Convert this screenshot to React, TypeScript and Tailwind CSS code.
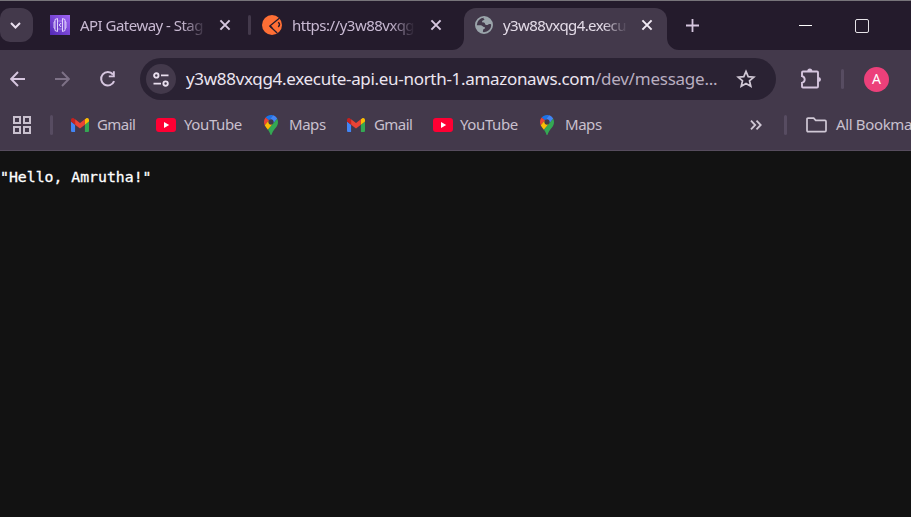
import type { ReactNode } from "react";

const Sep = ({ className }: { className: string }) => (
  <div className={`h-5 w-[3px] shrink-0 rounded-full ${className}`} />
);

const Close = ({ className, color = "#d6c6df" }: { className: string; color?: string }) => (
  <svg className={`size-3 shrink-0 ${className}`} viewBox="0 0 12 12">
    <path d="M1.4 1.4l9.2 9.2M10.6 1.4l-9.2 9.2" stroke={color} strokeWidth="2" />
  </svg>
);

const TabTitle = ({ children, className }: { children: ReactNode; className: string }) => (
  <span
    className={`block shrink-0 whitespace-nowrap pb-px text-[15px] leading-6 [mask-image:linear-gradient(to_right,black_80%,transparent)] ${className}`}
  >
    {children}
  </span>
);

const ApiGatewayIcon = () => (
  <svg className="ml-[17px] size-5 shrink-0" viewBox="0 0 20 20">
    <defs>
      <linearGradient id="gw" x1="0" y1="1" x2="1" y2="0">
        <stop offset="0" stopColor="#5128b4" />
        <stop offset="1" stopColor="#a065f5" />
      </linearGradient>
    </defs>
    <rect width="20" height="20" fill="url(#gw)" />
    <g fill="none" stroke="#eadfff">
      <path d="M7.500 3.500v13l-2.500-1V4.500zM12.500 3.500v13l2.500-1V4.500z" strokeWidth=".9" />
      <path d="M5 6.500l-1 .5v6l1 .5M15 6.500l1 .5v6l-1 .5" strokeWidth=".8" />
      <path d="M7.500 6h5M7.500 14h5" strokeDasharray="1 1" strokeWidth=".8" />
      <path d="M11.200 8L9.200 10l2 2" strokeWidth="1" />
    </g>
  </svg>
);

const OrangeIcon = () => (
  <svg className="ml-[11px] size-5 shrink-0" viewBox="0 0 20 20">
    <circle cx="10" cy="10" r="10" fill="#ff6f35" />
    <path d="M17.6 3L7.8 11l7.300 7" fill="none" stroke="#241b2c" strokeWidth="1.3" />
    <path d="M8 11.200l2.200 1.600" stroke="#241b2c" strokeWidth="1.500" />
    <path d="M16 7.400c2 .7 2 3 .2 4.400" fill="none" stroke="#241b2c" strokeWidth="1.500" />
  </svg>
);

const GlobeIcon = () => (
  <svg className="ml-[11px] size-[18px] shrink-0" viewBox="0 0 18 18">
    <circle cx="9" cy="9" r="8.1" fill="#43394b" stroke="#9ba5ab" strokeWidth="1.8" />
    <path
      d="M1.2 9.2h4.4c1.7 0 1.9 1.5 3.2 1.7 1.7.2 1.6 1.5.5 1.9-1.2.4-1.4 1-1.4 4.2C3.5 16.4 1 13 1.2 9.2zM9.3 1c-1.2 1.1-.8 2.1.2 2.3-.2 1.3-2.3.8-2.5 2.2-.1 1.2 1.6.9 2.4 1.3.8.5.3 2.1 2 2.2 1.9.1 1.9-1.3 3.2-1.1l2.3.4C16.5 4.6 13.5 1 9.3 1z"
      fill="#9ba5ab"
    />
  </svg>
);

const Gmail = ({ className }: { className: string }) => (
  <svg className={`h-[14px] w-[18px] shrink-0 ${className}`} viewBox="52 42 88 66" preserveAspectRatio="none">
    <path fill="#4285f4" d="M58 108h14V74L52 59v43c0 3.32 2.69 6 6 6" />
    <path fill="#34a853" d="M120 108h14c3.32 0 6-2.69 6-6V59l-20 15" />
    <path fill="#fbbc04" d="M120 48v26l20-15v-8c0-7.42-8.47-11.65-14.4-7.2" />
    <path fill="#ea4335" d="M72 74V48l24 18 24-18v26L96 92" />
    <path fill="#c5221f" d="M52 51v8l20 15V48l-5.6-4.2c-5.94-4.45-14.4-.22-14.4 7.2" />
  </svg>
);

const YouTube = () => (
  <svg className="h-[14px] w-5 shrink-0" viewBox="0 0 20 14">
    <rect width="20" height="14" rx="3" fill="#ff0033" />
    <path d="M8 4v6l5.2-3z" fill="#fff" />
  </svg>
);

const Maps = () => (
  <svg className="h-5 w-[14px] shrink-0" viewBox="0 0 92.3 132.3">
    <path fill="#1a73e8" d="M60.2 2.2C55.8.8 51 0 46.1 0 32 0 19.3 6.4 10.8 16.5l21.8 18.3z" />
    <path fill="#ea4335" d="M10.8 16.5C4.1 24.5 0 34.9 0 46.1c0 8.7 1.7 15.7 4.6 22l28-33.3z" />
    <path fill="#4285f4" d="M46.2 28.5c9.8 0 17.7 7.9 17.7 17.7 0 4.3-1.6 8.3-4.2 11.4 0 0 13.9-16.6 27.5-32.7-5.6-10.8-15.3-19-27-22.7L32.6 34.8c3.3-3.8 8.1-6.3 13.6-6.3" />
    <path fill="#fbbc04" d="M46.2 63.8c-9.8 0-17.7-7.9-17.7-17.7 0-4.3 1.5-8.3 4.1-11.3l-28 33.3c4.8 10.6 12.8 19.2 21 29.9l34.1-40.5c-3.3 3.9-8.1 6.3-13.5 6.3" />
    <path fill="#34a853" d="M59.1 109.2c15.4-24.1 33.3-35 33.3-63 0-7.7-1.9-14.9-5.2-21.3L25.6 98c2.6 3.4 5.3 7.3 7.9 11.3 9.4 14.5 6.8 23.1 12.8 23.1s3.4-8.7 12.8-23.2" />
  </svg>
);

const Label = ({ children, className }: { children: ReactNode; className: string }) => (
  <span className={`block shrink-0 whitespace-nowrap pb-0.5 text-[15px] leading-6 text-[#c9c0ce] ${className}`}>{children}</span>
);

function TabStrip() {
  return (
    <div className="flex h-[50px] items-center border-t border-[#77747a] bg-[#241b2c] pb-px text-[#c8b9d2]">
      <div className="flex h-[34px] w-[33px] shrink-0 items-center justify-center rounded-r-xl rounded-l-[10px] bg-[#43394b]">
        <svg className="mr-[3px] h-[7px] w-[11px]" viewBox="0 0 11 7">
          <path d="M1 1l4.5 4.5L10 1" fill="none" stroke="#e9dfee" strokeWidth="2" />
        </svg>
      </div>
      <ApiGatewayIcon />
      <TabTitle className="ml-[10px] w-[127px] tracking-[-0.52px]">API Gateway - Stag</TabTitle>
      <Close className="ml-3" />
      <Sep className="ml-[17px] bg-[#43394b]" />
      <OrangeIcon />
      <TabTitle className="ml-[10px] w-[123px] tracking-[-0.5px]">https://y3w88vxqg</TabTitle>
      <Close className="ml-[15px]" />
      <svg className="-mb-px ml-[10px] size-3 shrink-0 self-end" viewBox="0 0 12 12">
        <path d="M12 0v12H0A12 12 0 0 0 12 0z" fill="#43394b" />
      </svg>
      <div className="-mb-px flex h-[42px] w-[203px] shrink-0 items-center self-end rounded-t-xl bg-[#43394b] pb-2">
        <GlobeIcon />
        <TabTitle className="ml-[10px] w-[125px] tracking-[-0.58px] text-[#e3dbe7]">y3w88vxqg4.execu</TabTitle>
        <Close className="ml-[13px]" color="#f2ebf5" />
      </div>
      <svg className="-mb-px size-3 shrink-0 self-end" viewBox="0 0 12 12">
        <path d="M0 0v12h12A12 12 0 0 1 0 0z" fill="#43394b" />
      </svg>
      <svg className="ml-[7px] size-[13px] shrink-0" viewBox="0 0 13 13">
        <path d="M6.500 0v13M0 6.500h13" stroke="#d6c6df" strokeWidth="1.800" />
      </svg>
      <div className="ml-[100px] h-px w-[13px] shrink-0 bg-white" />
      <div className="mt-[2px] ml-[43px] size-[14px] shrink-0 rounded-[2px] border border-[#e6e3e8]" />
    </div>
  );
}

function Toolbar() {
  return (
    <div className="flex h-[58px] items-center text-[#d6c6df]">
      <svg className="ml-[10px] size-4 shrink-0" viewBox="0 0 16 16">
        <path d="M15 8H1.5M8 1L1.2 8 8 15" fill="none" stroke="#d6c6df" strokeWidth="1.9" />
      </svg>
      <svg className="ml-7 size-4 shrink-0" viewBox="0 0 16 16">
        <path d="M1 8h13.5M8 1l6.8 7L8 15" fill="none" stroke="#7d7186" strokeWidth="1.9" />
      </svg>
      <svg className="ml-[29px] size-[18px] shrink-0" viewBox="0 0 18 18">
        <path d="M15.1 11.2A6.7 6.7 0 1 1 14 4.5" fill="none" stroke="#d6c6df" strokeWidth="2" />
        <path d="M15.8 1.300v6H9.8V5.400h4.100V1.300z" fill="#d6c6df" />
      </svg>
      <div className="ml-[23px] flex h-[42px] w-[636px] shrink-0 items-center rounded-full bg-[#2a2233]">
        <div className="ml-[6px] flex size-[30px] shrink-0 items-center justify-center rounded-full bg-[#43394b]">
          <svg className="h-[15px] w-4" viewBox="0 0 16 15" fill="none" stroke="#e9dfee" strokeWidth="1.9">
            <circle cx="3.3" cy="3.4" r="2.2" />
            <path d="M8 3.4h7.5M.5 11.6H8" />
            <circle cx="12.6" cy="11.6" r="2.2" />
          </svg>
        </div>
        <span className="ml-[10px] block w-[540px] shrink-0 whitespace-nowrap text-[17px] leading-6 tracking-[-0.31px] text-[#ece5f0]">
          y3w88vxqg4.execute-api.eu-north-1.amazonaws.com
          <span className="tracking-[-0.23px] text-[#b9aec0]">/dev/message...</span>
        </span>
        <svg className="ml-[10px] size-5 shrink-0" viewBox="0 0 20 20">
          <path d="M10 2.4l2.2 5.2 5.6.5-4.3 3.7 1.3 5.5L10 14.4l-4.800 2.900 1.300-5.500-4.300-3.700 5.600-.5z" fill="none" stroke="#d0c8d5" strokeWidth="1.7" />
        </svg>
      </div>
      <svg className="ml-6 size-[22px] shrink-0" viewBox="0 0 22 22">
        <path d="M3 3.500h14q1 0 1 1v14q0 1-1 1H3q-1 0-1-1v-3.700c3.600-1 3.600-5.600 0-6.600V4.500q0-1 1-1z" fill="none" stroke="#d6c6df" strokeWidth="1.900" />
        <path d="M7.300 3a2.500 2.500 0 0 1 5 0zM18.500 9a2.500 2.500 0 0 1 0 5z" fill="#d6c6df" />
      </svg>
      <Sep className="ml-[19px] bg-[#574c61]" />
      <div className="ml-5 flex size-[25px] shrink-0 items-center justify-center rounded-full bg-[#ec407a] text-[14px] leading-none text-white">A</div>
    </div>
  );
}

function Bookmarks() {
  return (
    <div className="flex h-[43px] items-center overflow-hidden border-b border-[#564c5d] pb-[8px]">
      <svg className="ml-[13px] size-[18px] shrink-0" viewBox="0 0 18 18" fill="none" stroke="#c9c0ce" strokeWidth="2">
        <path d="M1 1h6v6H1zM11 1h6v6h-6zM1 11h6v6H1zM11 11h6v6h-6z" />
      </svg>
      <Sep className="ml-[19px] bg-[#574c61]" />
      <Gmail className="ml-[18px]" />
      <Label className="ml-2 w-[59px] tracking-[-0.55px]">Gmail</Label>
      <YouTube />
      <Label className="ml-2 w-[80px] tracking-[-0.4px]">YouTube</Label>
      <Maps />
      <Label className="ml-[11px] w-[58px] tracking-[-0.45px]">Maps</Label>
      <Gmail className="" />
      <Label className="ml-[9px] w-[59px] tracking-[-0.55px]">Gmail</Label>
      <YouTube />
      <Label className="ml-[7px] w-[80px] tracking-[-0.4px]">YouTube</Label>
      <Maps />
      <Label className="ml-[11px] w-[185px] tracking-[-0.45px]">Maps</Label>
      <svg className="h-[10px] w-3 shrink-0" viewBox="0 0 12 10">
        <path d="M1 .7L5.200 5 1 9.300M6.500.7L10.700 5 6.500 9.300" fill="none" stroke="#d0c8d5" strokeWidth="1.800" />
      </svg>
      <Sep className="ml-[22px] bg-[#574c61]" />
      <svg className="ml-[19px] h-4 w-[21px] shrink-0" viewBox="0 0 21 16">
        <path d="M2 1.200h5.700l2 2.200H19q1 0 1 1v9.200q0 1-1 1H2q-1 0-1-1V2.200q0-1 1-1z" fill="none" stroke="#d0c8d5" strokeWidth="1.700" />
      </svg>
      <Label className="ml-[9px] tracking-[-0.35px]">All Bookmarks</Label>
    </div>
  );
}

export default function App() {
  return (
    <div className="flex h-[517px] w-[911px] flex-col overflow-hidden bg-[#43394b] font-['Noto_Sans',sans-serif]">
      <TabStrip />
      <Toolbar />
      <Bookmarks />
      <div className="flex-1 overflow-hidden bg-[#121212] pt-[16px]">
        <pre className="font-['DejaVu_Sans_Mono',monospace] text-[14.8px] leading-5 text-white [-webkit-text-stroke:0.3px_white]">"Hello, Amrutha!"</pre>
      </div>
    </div>
  );
}
